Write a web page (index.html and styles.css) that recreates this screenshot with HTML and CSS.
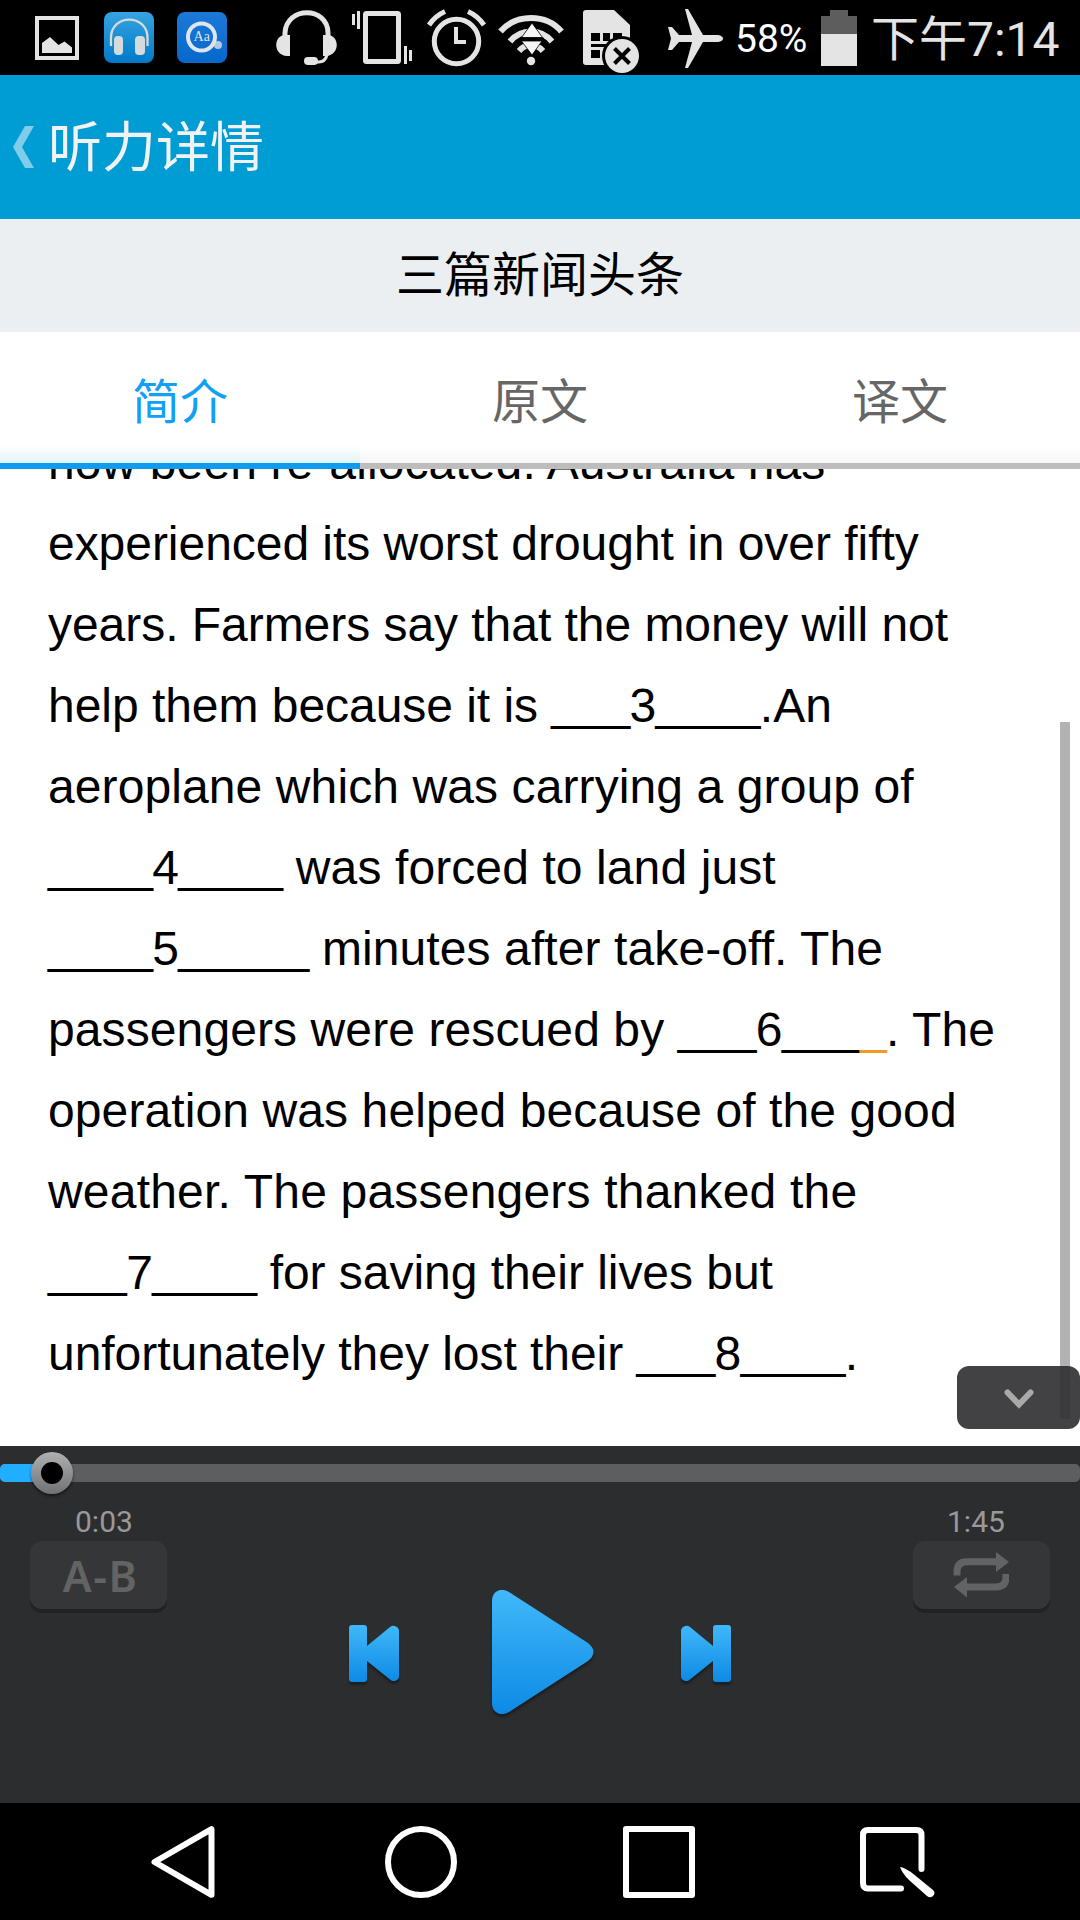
FILE: index.html
```html
<!DOCTYPE html>
<html lang="zh-CN">

<head>
    <meta charset="UTF-8">
    <meta name="viewport" content="width=device-width, initial-scale=1.0">
    <title>听力详情</title>
    <link rel="stylesheet" href="styles.css">
</head>

<body>
    <div class="screen">
        <!-- Status Bar -->
        <div class="status-bar">
            <div class="status-group notifications">
                <svg width="44" height="44" viewBox="35 16 44 44">
                    <rect x="37" y="18" width="40" height="40" fill="none" stroke="#e4e4e4" stroke-width="4" />
                    <path d="M42 53V43L50 37L58.5 45L64.500 41.500L72 47.500V53Z" fill="#e4e4e4" />
                </svg>
                <svg class="music" width="50" height="51" viewBox="104 12 50 51">
                    <defs>
                        <linearGradient id="music-bg" x1="0" y1="0" x2="0" y2="1">
                            <stop offset="0" stop-color="#36a3df" />
                            <stop offset="1" stop-color="#007ac9" />
                        </linearGradient>
                    </defs>
                    <rect x="104" y="12" width="50" height="51" rx="8" fill="url(#music-bg)" />
                    <path d="M111 46V38C111 13.500 147.500 13.500 147.500 38V46" fill="none" stroke="#d5dadd" stroke-width="2.300" />
                    <rect x="114" y="36" width="9" height="19" rx="4" fill="#d5dadd" />
                    <rect x="135" y="36" width="10" height="19" rx="4" fill="#d5dadd" />
                </svg>
                <svg width="50" height="51" viewBox="176 12 50 51">
                    <defs>
                        <linearGradient id="dict-bg" x1="0" y1="0" x2="0" y2="1">
                            <stop offset="0" stop-color="#1c79d8" />
                            <stop offset="1" stop-color="#0668cc" />
                        </linearGradient>
                    </defs>
                    <rect x="176" y="12" width="50" height="51" rx="8" fill="url(#dict-bg)" />
                    <circle cx="217" cy="45" r="4" fill="#b3c9e2" />
                    <circle cx="200.500" cy="37" r="13.500" fill="none" stroke="#dfe5ec" stroke-width="4" />
                    <text x="200.700" y="41" class="dict-text">Aa</text>
                </svg>
            </div>
            <div class="status-group indicators">
                <!-- headset -->
                <svg width="62" height="56" viewBox="276 9 62 56">
                    <path d="M285 36V32C286 5 328 5 328 32V36" fill="none" stroke="#e4e4e4" stroke-width="5" />
                    <path d="M290 34V55H287C273 54 273 35 285 34ZM323 34V55H326C340 54 340 35 328 34Z" fill="#e4e4e4" />
                    <path d="M327 54Q325 61 319 61H312" fill="none" stroke="#e4e4e4" stroke-width="3" />
                    <rect x="304" y="56" width="14" height="8" rx="4" fill="#e4e4e4" />
                </svg>
                <!-- vibrate -->
                <svg width="60" height="54" viewBox="352 11 60 54">
                    <rect x="365.500" y="13.500" width="33" height="48" rx="1" fill="none" stroke="#e4e4e4" stroke-width="5" />
                    <path d="M353.500 14V25M358.500 11V29M405.500 46V64M410.500 50V61" stroke="#e4e4e4" stroke-width="3" />
                </svg>
                <!-- alarm -->
                <svg class="alarm" width="60" height="58" viewBox="427 9 60 58">
                    <circle cx="456.500" cy="41.500" r="22.200" fill="none" stroke="#e4e4e4" stroke-width="5" />
                    <path d="M456 27V42H466" fill="none" stroke="#e4e4e4" stroke-width="4" />
                    <path d="M429 25Q435 16 445 11.500M468 11.500Q478 16 484 25" fill="none" stroke="#e4e4e4" stroke-width="5" />
                </svg>
                <!-- wifi -->
                <svg class="wifi" width="66" height="52" viewBox="498 14 66 52">
                    <path d="M500.500 31.500C516 13.500 546 13.500 561.500 31.500" fill="none" stroke="#e4e4e4" stroke-width="6" />
                    <path d="M510 41.500C521 28 541 28 552 41.500M519 51C526 43 536 43 543 51" fill="none" stroke="#e4e4e4" stroke-width="6" />
                    <circle cx="531" cy="61" r="4.200" fill="#e4e4e4" />
                    <path d="M532 23L542.500 37.500H521.500ZM521.500 41H542L532 55Z" fill="#f6f6f6" stroke="#000" stroke-width="0.800" />
                    <path d="M520 39.200H544" stroke="#000" stroke-width="3" />
                </svg>
                <!-- no sim -->
                <svg class="sim" width="58" height="64" viewBox="582 9 58 64">
                    <path d="M586 10H614L630 25V65H586Q583 65 583 62V13Q583 10 586 10Z" fill="#e4e4e4" />
                    <path d="M591 33H600V41H591ZM603 33H610V41H603ZM613 33H622V41H613ZM591 44H622V47H591ZM591 50H600V58H591Z" fill="#000" />
                    <circle cx="622" cy="56" r="20" fill="#000" />
                    <circle cx="622" cy="56" r="17" fill="#e4e4e4" />
                    <path d="M614.500 48.500L629.500 63.500M629.500 48.500L614.500 63.500" stroke="#000" stroke-width="4" />
                </svg>
                <!-- airplane -->
                <svg class="airplane" width="56" height="60" viewBox="668 9 56 60">
                    <path d="M685 9H688L703 35H718Q723 36 723 38.500Q723 41 718 42H703L688 68H685L692 42H679L672 50H668L671 38.500L668 27H672L679 35H692Z" fill="#e4e4e4" />
                </svg>
                <span class="battery-percent">58%</span>
                <svg width="36" height="56" viewBox="820 9 36 56">
                    <path d="M829 9H847V15H856V33H820V15H829Z" fill="#5d5d5d" />
                    <path d="M820 33H856V65H820Z" fill="#e4e4e4" />
                </svg>
                <span class="clock">下午7:14</span>
            </div>
        </div>

        <!-- App Bar -->
        <div class="app-bar">
            <svg width="21" height="42" viewBox="0 0 21 42">
                <path d="M12 0H21L9 21L21 42H12L0 21Z" fill="#80cdea" />
            </svg>
            <span class="app-title">听力详情</span>
        </div>
        <div class="lesson-title">三篇新闻头条</div>

        <!-- Tabs -->
        <div class="tabs">
            <div class="tab active">简介</div>
            <div class="tab">原文</div>
            <div class="tab">译文</div>
        </div>

        <!-- Passage -->
        <div class="reader">
            <p class="passage">
                now been re-allocated. Australia has<br>
                <span class="tight">experienced its worst drought in over fifty</span><br>
                <span class="tight">years. Farmers say that the money will not</span><br>
                <span class="tight">help them because it is </span><span class="blank"><span class="line">___</span>3<span class="line">____</span></span>.An<br>
                aeroplane which was carrying a group of<br>
                <span class="blank"><span class="line">____</span>4<span class="line">____</span></span> was forced to land just<br>
                <span class="blank"><span class="line">____</span>5<span class="line">_____</span></span> minutes after take-off. The<br>
                passengers were rescued by <span class="blank"><span class="line">___</span>6<span class="line">___<span class="mark">_</span></span></span>. The<br>
                operation was helped because of the good<br>
                <span class="loose">weather. The passengers thanked the</span><br>
                <span class="blank"><span class="line">___</span>7<span class="line">____</span></span><span class="tight"> for saving their lives but</span><br>
                <span class="tight">unfortunately they lost their </span><span class="blank"><span class="line">___</span>8<span class="line">____</span></span>.
            </p>
            <div class="scrollbar"></div>
            <div class="collapse-button">
                <svg width="30" height="20" viewBox="0 0 30 20">
                    <path d="M3.500 3.500L15 15.500L26.500 3.500" fill="none" stroke="#a9a9a9" stroke-width="6" stroke-linecap="round" />
                </svg>
            </div>
        </div>

        <!-- Player -->
        <div class="player">
            <div class="seek-bar">
                <div class="seek-progress"></div>
                <div class="seek-thumb"></div>
            </div>
            <div class="player-body">
                <div class="side">
                    <div class="time">0:03</div>
                    <div class="side-button"><span class="ab-text">A-B</span></div>
                </div>
                <div class="controls">
                    <svg class="skip" width="50" height="57" viewBox="0 0 50 57">
                        <defs>
                            <linearGradient id="skip-blue" gradientUnits="userSpaceOnUse" x1="0" y1="0" x2="0" y2="57">
                                <stop offset="0" stop-color="#40b8f9" />
                                <stop offset="1" stop-color="#0d8ae5" />
                            </linearGradient>
                        </defs>
                        <path d="M3 0H15Q18 0 18 3V21L41 2Q44 0 47 1.500Q50 3 50 6V51Q50 54 47 55.500Q44 57 41 54.500L18 36V54Q18 57 15 57H3Q0 57 0 54V3Q0 0 3 0Z" fill="url(#skip-blue)" />
                    </svg>
                    <svg class="play" width="102" height="124" viewBox="0 0 102 124">
                        <defs>
                            <linearGradient id="play-blue" x1="0" y1="0" x2="0" y2="1">
                                <stop offset="0" stop-color="#40b8f9" />
                                <stop offset="1" stop-color="#0d8ae5" />
                            </linearGradient>
                        </defs>
                        <path d="M0 11C0 1 9 -3 17 2L96 53Q107 62 96 71L17 122C9 127 0 123 0 113Z" fill="url(#play-blue)" />
                    </svg>
                    <svg class="skip" width="50" height="57" viewBox="0 0 50 57">
                        <path transform="translate(50 0) scale(-1 1)" d="M3 0H15Q18 0 18 3V21L41 2Q44 0 47 1.500Q50 3 50 6V51Q50 54 47 55.500Q44 57 41 54.500L18 36V54Q18 57 15 57H3Q0 57 0 54V3Q0 0 3 0Z" fill="url(#skip-blue)" />
                    </svg>
                </div>
                <div class="side right">
                    <div class="time">1:45</div>
                    <div class="side-button">
                        <svg class="repeat" width="56" height="46" viewBox="953 1552 56 46">
                            <path d="M957 1575.500V1572Q957 1561.800 967 1561.800H997M1006 1574V1577Q1006 1587 996 1587H966" fill="none" stroke="#636363" stroke-width="7" />
                            <path d="M996 1552L1009 1562L996 1572ZM967 1577L954 1587L967 1597.500Z" fill="#636363" />
                        </svg>
                    </div>
                </div>
            </div>
        </div>

        <!-- Navigation Bar -->
        <div class="nav-bar">
            <svg width="64" height="72" viewBox="0 0 64 72">
                <path d="M3.500 36L60.500 3.200V68.800Z" fill="none" stroke="#fff" stroke-width="6" stroke-linejoin="round" />
            </svg>
            <svg class="nav-home" width="72" height="72" viewBox="0 0 72 72">
                <circle cx="36" cy="36" r="33" fill="none" stroke="#fff" stroke-width="6" />
            </svg>
            <svg class="nav-recent" width="72" height="72" viewBox="0 0 72 72">
                <rect x="3" y="3" width="66" height="66" fill="none" stroke="#fff" stroke-width="6" stroke-linejoin="round" />
            </svg>
            <svg class="nav-memo" width="75" height="72" viewBox="0 0 75 72">
                <path d="M61.500 43V9Q61.500 4 56.500 4H8Q3 4 3 9V57Q3 62.500 8 62.500H41" fill="none" stroke="#fff" stroke-width="6" stroke-linecap="round" />
                <path d="M40 41Q46 42 54 48.500L73 64Q76 67 73 70Q70 72.500 67 70L49 54Q42 47 40 41Z" fill="#fff" />
            </svg>
        </div>
    </div>
</body>

</html>
```

FILE: styles.css
```css
/* General Styles */
* {
    box-sizing: border-box;
}

body {
    margin: 0;
    background-color: #fff;
    font-family: Roboto, 'Noto Sans CJK SC', sans-serif;
}

svg {
    display: block;
    flex-shrink: 0;
}

.screen {
    width: 1080px;
    height: 1920px;
    display: flex;
    flex-direction: column;
    overflow: hidden;
}

/* Status Bar */
.status-bar {
    height: 75px;
    padding: 0 21px 0 35px;
    background-color: #000;
    display: flex;
    justify-content: space-between;
    flex-shrink: 0;
}

.status-group {
    display: flex;
    align-items: center;
}

.notifications {
    gap: 23px;
}

.music {
    margin-left: 2px;
}

.indicators {
    gap: 14px;
    white-space: nowrap;
}

.alarm {
    margin-left: 1px;
}

.wifi {
    margin: 4px 0 0 -3px;
}

.sim {
    margin: 7px 0 0 4px;
}

.airplane {
    margin: 2px 0 0 14px;
}

.dict-text {
    font-family: 'Liberation Serif', serif;
    font-size: 14px;
    fill: #dfe5ec;
    text-anchor: middle;
}

.battery-percent {
    width: 72px;
    margin-left: -3px;
    padding-top: 3px;
    color: #fff;
    font-size: 39px;
}

.clock {
    width: 188px;
    padding-bottom: 6px;
    color: #e4e4e4;
    font-size: 48px;
}

/* App Bar */
.app-bar {
    height: 144px;
    padding-left: 13px;
    background-color: #009dd5;
    display: flex;
    align-items: center;
    gap: 14px;
    flex-shrink: 0;
}

.app-title {
    padding-top: 4px;
    color: #f2f2f2;
    font-size: 54px;
    line-height: 80px;
}

.lesson-title {
    height: 113px;
    background-color: #ebeff2;
    color: #000;
    font-size: 48px;
    line-height: 114px;
    text-align: center;
    flex-shrink: 0;
}

/* Tabs */
.tabs {
    height: 137px;
    display: flex;
    flex-shrink: 0;
}

.tab {
    flex: 1;
    border-bottom: 6px solid #bdbdbd;
    background: linear-gradient(to top, #f6f6f6, #fff 18px);
    color: #666;
    font-size: 48px;
    line-height: 142px;
    text-align: center;
}

.tab.active {
    border-bottom-color: #119bec;
    background: linear-gradient(to top, #e2f4fd, #fff 18px);
    color: #10a0f5;
}

/* Passage */
.reader {
    position: relative;
    height: 977px;
    padding-left: 48px;
    overflow: hidden;
    flex-shrink: 0;
}

.passage {
    margin: -47px 0 0;
    color: #000;
    font-family: 'Liberation Sans', Arial, sans-serif;
    font-size: 48px;
    line-height: 81px;
    letter-spacing: 0.1px;
    white-space: nowrap;
}

.tight {
    letter-spacing: -0.04px;
}

.loose {
    letter-spacing: 0.2px;
}

.blank {
    letter-spacing: -0.65px;
}

.line {
    line-height: 0;
    vertical-align: 3px;
}

.mark {
    color: #f09a1e;
}

.scrollbar {
    position: absolute;
    top: 253px;
    right: 10px;
    width: 10px;
    height: 697px;
    background-color: #b2b2b2;
}

.collapse-button {
    position: absolute;
    right: 0;
    bottom: 17px;
    width: 123px;
    height: 63px;
    padding: 3px 0 0 47px;
    border-radius: 12px;
    background-color: rgba(45, 46, 48, 0.9);
    display: flex;
    align-items: center;
}

/* Player */
.player {
    height: 357px;
    padding-top: 18px;
    background-color: #2c2d2f;
    flex-shrink: 0;
}

.seek-bar {
    position: relative;
    height: 18px;
    border-radius: 5px;
    background-color: #5e5e5e;
}

.seek-progress {
    width: 52px;
    height: 18px;
    border-radius: 5px 0 0 5px;
    background-color: #22aeff;
}

.seek-thumb {
    position: absolute;
    left: 31px;
    top: -12px;
    width: 42px;
    height: 42px;
    border: 10px solid transparent;
    border-radius: 50%;
    background: linear-gradient(#000, #000) padding-box, linear-gradient(#b0b0b0, #707174) border-box;
    box-shadow: 0 2px 3px rgba(0, 0, 0, 0.5);
}

.player-body {
    padding: 21px 30px 0;
    display: flex;
    justify-content: space-between;
}

.side {
    width: 137px;
}

.time {
    padding-left: 45px;
    color: #999;
    font-size: 30px;
    line-height: 38px;
}

.right .time {
    padding-left: 34px;
}

.side-button {
    height: 68px;
    border-radius: 12px;
    background-color: #353638;
    box-shadow: 0 4px 0 #212223;
    display: flex;
    justify-content: center;
    align-items: center;
}

.ab-text {
    padding: 2px 0 0 4px;
    color: #636363;
    font-family: 'Noto Sans', sans-serif;
    font-size: 43px;
    font-weight: 600;
    line-height: 60px;
    letter-spacing: 1.5px;
}

.repeat {
    margin-right: 2px;
}

.controls {
    padding-top: 87px;
    display: flex;
    align-items: flex-start;
}

.skip {
    margin-top: 35px;
}

.play {
    margin: 0 87px 0 93px;
}

.skip,
.play {
    filter: drop-shadow(0 3px 1px #1d1e1f);
}

/* Navigation Bar */
.nav-bar {
    height: 117px;
    padding-left: 151px;
    background-color: #000;
    display: flex;
    align-items: center;
    flex-shrink: 0;
}

.nav-home {
    margin-left: 170px;
}

.nav-recent {
    margin-left: 166px;
}

.nav-memo {
    margin-left: 165px;
}
```
